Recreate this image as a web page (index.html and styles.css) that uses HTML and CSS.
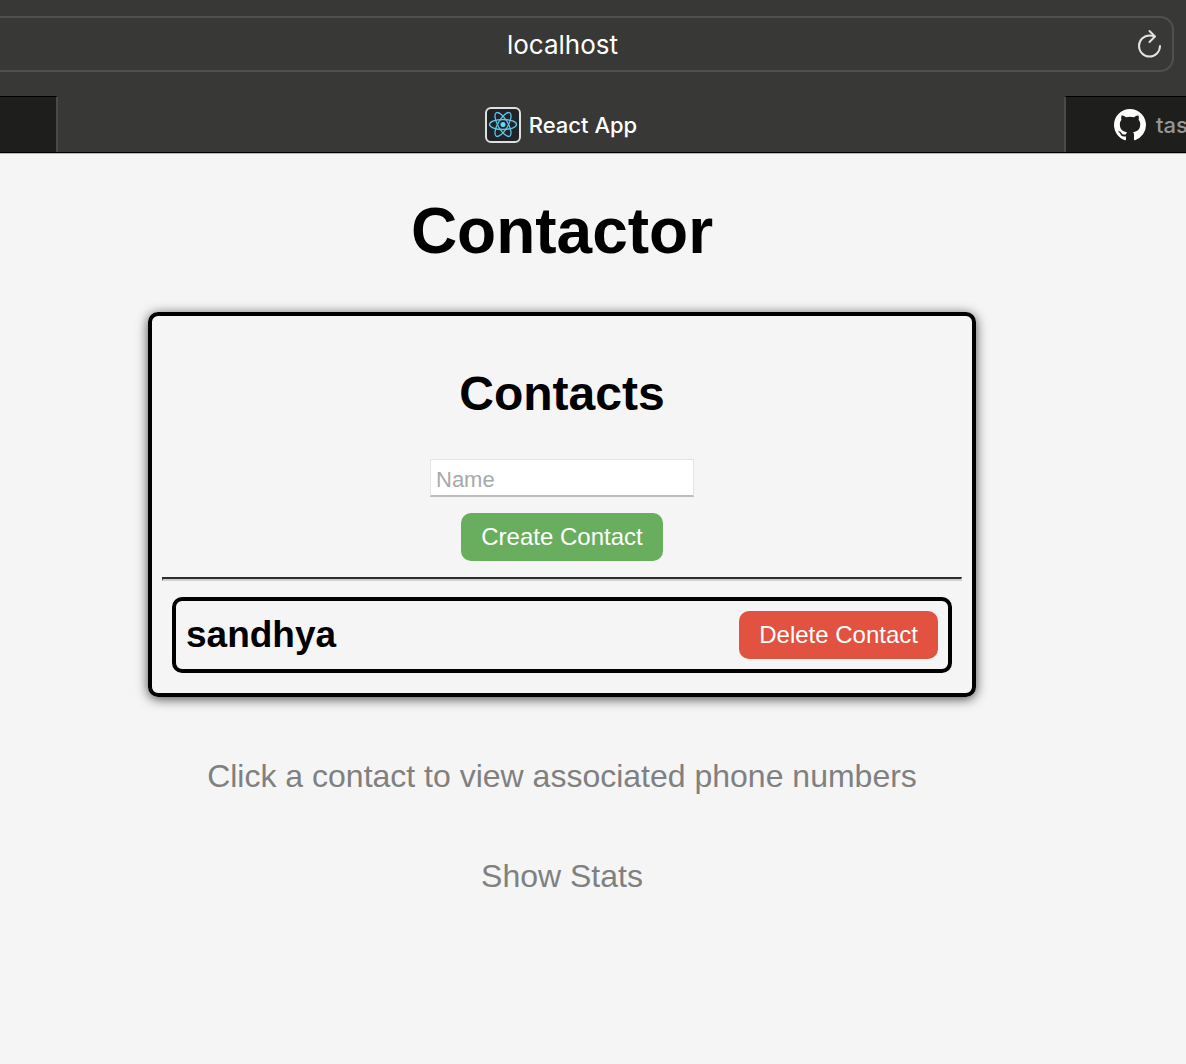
FILE: index.html
```html
<!DOCTYPE html>
<html lang="en">
<head>
<meta charset="utf-8">
<title>React App</title>
<link rel="stylesheet" href="styles.css">
</head>
<body>
<header class="browser">
  <div class="toolbar">
    <div class="address">
      <span class="host">localhost</span>
      <button class="reload" type="button" aria-label="Reload">
        <svg width="28" height="32" viewBox="0 0 28 32" fill="none" stroke="#e2e2e1" stroke-width="2" stroke-linecap="round" stroke-linejoin="round"><path d="M25 18A10.500 10.500 0 1 1 14.500 7.500Q17 7.500 19.500 8.500"/><path d="M14.500 3L20 8.500L14.500 14"/></svg>
      </button>
    </div>
  </div>
  <nav class="tabs">
    <div class="tab-previous"></div>
    <div class="tab-active">
      <svg width="36" height="36" viewBox="0 0 36 36" fill="none"><rect x="1" y="1" width="34" height="34" rx="5" fill="#202327" stroke="#dedfdf" stroke-width="2"/><g stroke="#61c6e8" stroke-width="1.300"><ellipse cx="18" cy="17.500" rx="13.500" ry="5"/><ellipse cx="18" cy="17.500" rx="13.500" ry="5" transform="rotate(60 18 17.500)"/><ellipse cx="18" cy="17.500" rx="13.500" ry="5" transform="rotate(120 18 17.500)"/></g><circle cx="18" cy="17.500" r="2.500" fill="#61dafb"/></svg>
      <span>React App</span>
    </div>
    <div class="tab-next">
      <svg width="32" height="32" viewBox="0 0 16 16" fill="#fff"><path d="M8 0C3.580 0 0 3.580 0 8c0 3.540 2.290 6.530 5.470 7.590.4.070.55-.17.55-.38 0-.19-.01-.82-.01-1.490-2.010.37-2.530-.49-2.690-.94-.09-.23-.48-.94-.82-1.130-.28-.15-.68-.52-.01-.53.63-.01 1.080.58 1.230.82.72 1.210 1.870.87 2.330.66.070-.52.28-.87.51-1.070-1.780-.2-3.640-.89-3.640-3.950 0-.87.31-1.590.82-2.150-.08-.2-.36-1.020.08-2.120 0 0 .67-.21 2.200.82.64-.18 1.320-.27 2-.27s1.360.09 2 .27c1.530-1.040 2.200-.82 2.200-.82.44 1.100.16 1.920.08 2.120.51.56.82 1.270.82 2.150 0 3.070-1.870 3.750-3.650 3.950.29.25.54.73.54 1.480 0 1.070-.01 1.930-.01 2.200 0 .21.15.46.55.38A8.010 8.010 0 0 0 16 8c0-4.420-3.580-8-8-8z"/></svg>
      <span>tas</span>
    </div>
  </nav>
</header>
<main class="page">
  <h1>Contactor</h1>
  <section class="card">
    <h2>Contacts</h2>
    <form class="create">
      <input class="name" type="text" placeholder="Name" aria-label="Name">
      <button class="button button-create" type="button">Create Contact</button>
    </form>
    <hr>
    <div class="contact">
      <h3>sandhya</h3>
      <button class="button button-delete" type="button">Delete Contact</button>
    </div>
  </section>
  <p class="hint">Click a contact to view associated phone numbers</p>
  <button class="stats" type="button">Show Stats</button>
</main>
</body>
</html>
```
FILE: styles.css
```css
* { box-sizing: border-box; }
body {
  margin: 0;
  background: #f5f5f5;
  color: #000;
  font-family: "Liberation Sans", Arial, sans-serif;
  overflow-x: hidden;
}
h1, h2, h3, p { margin: 0; }
button { font-family: inherit; border: 0; cursor: pointer; }
svg { display: block; flex: none; }

.browser {
  background: #383836;
  color: #fff;
  font-family: Inter, sans-serif;
  border-bottom: 1px solid #b8b8b8;
}
.toolbar { padding: 16px 12px 24px 0; }
.address {
  display: grid;
  grid-template-columns: 1fr auto;
  align-items: center;
  height: 56px;
  border: 2px solid #50504e;
  border-left: 0;
  border-radius: 0 14px 14px 0;
  padding-right: 9px;
}
.host { font-size: 26px; text-align: center; line-height: 32px; padding: 2px 10px 0 0; }
.reload { background: none; padding: 0; }
.tabs {
  display: grid;
  grid-template-columns: 58px 1fr 122px;
  height: 57px;
  border-bottom: 1px solid #000;
  font-size: 22px;
}
.tab-previous, .tab-next {
  background: #1e1e1c;
  border-top: 1px solid #000;
}
.tab-previous { border-right: 2px solid #4a4a48; }
.tab-active {
  display: flex;
  align-items: center;
  justify-content: center;
  gap: 8px;
  font-weight: 500;
  padding-top: 1px;
}
.tab-next {
  display: flex;
  align-items: center;
  gap: 10px;
  padding-left: 48px;
  border-left: 2px solid #4a4a48;
  color: #969695;
  font-weight: 500;
  overflow: hidden;
}

.page {
  display: flex;
  flex-direction: column;
  align-items: center;
  padding: 41px 62px 64px 0;
}
h1 { font-size: 64px; line-height: 72px; margin-bottom: 45px; }
.card {
  width: 100%;
  max-width: 828px;
  border: 4px solid #000;
  border-radius: 10px;
  padding: 50px 10px 20px;
  box-shadow: 0 2px 12px rgba(0, 0, 0, 0.7);
}
h2 { font-size: 48px; line-height: 56px; text-align: center; }
.create {
  display: flex;
  flex-direction: column;
  align-items: center;
  gap: 16px;
  padding: 37px 0 16px;
}
.name {
  width: 264px;
  height: 38px;
  padding: 4px 5px 0;
  border: 1px solid #e4e4e4;
  border-bottom: 2px solid #bcbcbc;
  background: #fff;
  font-family: inherit;
  font-size: 22px;
}
.name::placeholder { color: #a9a9a9; }
.button {
  height: 48px;
  padding: 0 20px;
  border-radius: 10px;
  color: #fff;
  font-size: 24px;
  white-space: nowrap;
}
.button-create { background: #69ad5e; }
.button-delete { background: #e15241; }
hr {
  margin: 0 0 16px;
  border: 2px solid;
  border-color: #2c2c2c #d0d0d0 #d0d0d0 #2c2c2c;
  border-width: 2px 1px;
}
.contact {
  display: flex;
  align-items: center;
  justify-content: space-between;
  margin: 0 10px;
  padding: 10px;
  border: 4px solid #000;
  border-radius: 10px;
}
h3 { font-size: 37px; line-height: 42px; }
.hint, .stats {
  margin-top: 64px;
  font-size: 32px;
  line-height: 36px;
  color: #808080;
}
.hint { margin-top: 61px; }
.stats { background: none; padding: 0; }
```
